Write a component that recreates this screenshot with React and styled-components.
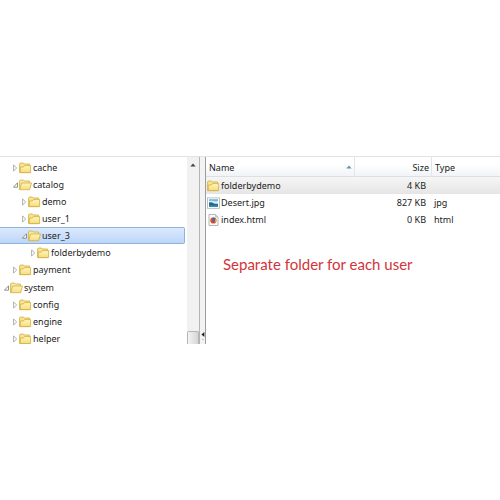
import React, { useState } from "react";
import styled, { createGlobalStyle } from "styled-components";

const tree = [
  { name: "cache", level: 1 },
  { name: "catalog", level: 1, open: true },
  { name: "demo", level: 2 },
  { name: "user_1", level: 2 },
  { name: "user_3", level: 2, open: true },
  { name: "folderbydemo", level: 3 },
  { name: "payment", level: 1 },
  { name: "system", level: 0, open: true },
  { name: "config", level: 1 },
  { name: "engine", level: 1 },
  { name: "helper", level: 1 },
];

const files = [
  { name: "folderbydemo", size: "4 KB", type: "", icon: "folder" },
  { name: "Desert.jpg", size: "827 KB", type: "jpg", icon: "image" },
  { name: "index.html", size: "0 KB", type: "html", icon: "html" },
];

const Arrow = ({ open }) => (
  <svg width="6" height="8" viewBox="0 0 6 8" fill="#fff" strokeWidth="0.8">
    {open ? (
      <path d="M4.5 1.8V6.2H0.4Z" stroke="#777" />
    ) : (
      <path d="M0.6 1L3.7 4L0.6 7Z" stroke="#9a9a9a" />
    )}
  </svg>
);

const FolderIcon = ({ open }) => (
  <svg width="13" height="12" viewBox="0 0 13 12">
    <defs>
      <linearGradient id="folder" x1="0" y1="0" x2="0" y2="1">
        <stop offset="0" stopColor="#fff6bd" />
        <stop offset="1" stopColor="#f6dc7c" />
      </linearGradient>
    </defs>
    {open ? (
      <g stroke="#d0ad40" strokeWidth="0.8" strokeLinejoin="round">
        <path d="M0.6 10.6V2L1.4 1H4.4L5.4 2H10.4V5" fill="#fbeaa0" />
        <path d="M0.7 10.7L2.6 4H12.5L10.6 10.7Z" fill="url(#folder)" />
      </g>
    ) : (
      <g stroke="#d0ad40" strokeWidth="0.8" strokeLinejoin="round">
        <path d="M0.6 10.6V2L1.4 1H4.4L5.4 2H10.6V10.6Z" fill="#f9e38c" />
        <path d="M1.3 10.6V5L4.4 5L5.4 3.6H11.6V10.6Z" fill="url(#folder)" />
      </g>
    )}
  </svg>
);

const ImageIcon = () => (
  <svg width="13" height="12" viewBox="0 0 13 12">
    <rect x="0.5" y="0.9" width="12" height="10.4" fill="#fff" stroke="#aab2b8" strokeWidth="0.8" />
    <rect x="2" y="2.2" width="9" height="7.6" fill="#6fb6e2" />
    <path d="M2 4.2C5 2.8 7 5.4 11 4V6.4H2Z" fill="#d5effa" />
    <path d="M2 5.4L4.6 5.2L8 7L11 7.2V9.8H2Z" fill="#256a80" />
    <path d="M2 8.6L11 8.8V9.8H2Z" fill="#3f8fc4" />
  </svg>
);

const HtmlIcon = () => (
  <svg width="13" height="12" viewBox="0 0 13 12">
    <path d="M2 0.5H8.6L11 2.9V11.5H2Z" fill="#fafafa" stroke="#a5a5a5" strokeWidth="0.8" />
    <path d="M8.6 0.5V2.9H11" fill="#ddd" stroke="#a5a5a5" strokeWidth="0.6" />
    <circle cx="6.4" cy="6.4" r="3.1" fill="#e2622a" />
    <circle cx="6.8" cy="5.8" r="2" fill="#3b6fb5" />
    <path d="M3.4 5C3.8 7.4 6 8 8.6 6.8C8 9.8 3.4 10.2 3.4 5Z" fill="#d8431f" />
    <path d="M8.4 4.2C9.6 5.6 9.5 7.4 8.2 8.6L8 6.6Z" fill="#f4a640" />
  </svg>
);

const FileIcon = ({ type }) => {
  if (type === "image") return <ImageIcon />;
  if (type === "html") return <HtmlIcon />;
  return <FolderIcon />;
};

const App = () => {
  const [selected, setSelected] = useState("user_3");

  return (
    <Page>
      <GlobalStyle />
      <Explorer>
        <Tree>
          {tree.map((item) => (
            <TreeItem key={item.name} $root={item.level === 0}>
              <TreeButton
                type="button"
                $level={item.level}
                $selected={item.name === selected}
                onClick={() => setSelected(item.name)}
              >
                <Arrow open={item.open} />
                <FolderIcon open={item.open} />
                <Label>{item.name}</Label>
              </TreeButton>
            </TreeItem>
          ))}
        </Tree>
        <ScrollBar>
          <ScrollUp type="button" aria-label="Scroll up">
            <svg width="6" height="4" viewBox="0 0 6 4">
              <path d="M0.3 3.6L3 0.4L5.7 3.6Z" fill="#444" />
            </svg>
          </ScrollUp>
          <Thumb />
        </ScrollBar>
        <Splitter>
          <svg width="4" height="8" viewBox="0 0 4 8">
            <path d="M3.4 0V5L0.4 2.5Z" fill="#222" />
            <rect x="1.5" y="7" width="1" height="1" fill="#999" />
          </svg>
        </Splitter>
        <FilePane>
          <FileTable>
            <colgroup>
              <NameCol />
              <SizeCol />
              <col />
            </colgroup>
            <thead>
              <tr>
                <HeadCell>
                  <SortHead>
                    Name
                    <svg width="6" height="4" viewBox="0 0 6 4">
                      <path d="M0.3 3.6L3 0.6L5.7 3.6Z" fill="#6f8fa8" />
                    </svg>
                  </SortHead>
                </HeadCell>
                <HeadCell $right>Size</HeadCell>
                <HeadCell>Type</HeadCell>
              </tr>
            </thead>
            <tbody>
              {files.map((file) => (
                <FileRow key={file.name} $active={file.icon === "folder"}>
                  <Cell>
                    <FileName>
                      <FileIcon type={file.icon} />
                      <Label>{file.name}</Label>
                    </FileName>
                  </Cell>
                  <Cell $right>{file.size}</Cell>
                  <Cell>{file.type}</Cell>
                </FileRow>
              ))}
            </tbody>
          </FileTable>
          <Note>Separate folder for each user</Note>
        </FilePane>
      </Explorer>
    </Page>
  );
};

export default App;

const GlobalStyle = createGlobalStyle`
  * {
    box-sizing: border-box;
  }
  body {
    margin: 0;
    background: #fff;
    color: #1c1c1c;
    font: 9px/17px "Noto Sans", "Open Sans", sans-serif;
  }
  button {
    padding: 0;
    border: 0;
    background: none;
    color: inherit;
    font: inherit;
  }
  svg {
    display: block;
    flex: none;
  }
`;

const Page = styled.main`
  min-height: 100vh;
  display: flex;
  align-items: center;
`;

const Explorer = styled.div`
  width: 100%;
  display: flex;
  border-top: 1px solid #e3e3e3;
`;

const Tree = styled.ul`
  flex: 1;
  max-width: 187px;
  height: 187px;
  margin: 0;
  padding: 2px 2px 0 0;
  overflow: hidden;
  list-style: none;
`;

const TreeItem = styled.li`
  height: 17px;
  margin-top: ${(props) => (props.$root ? 1 : 0)}px;
  display: flex;
`;

const TreeButton = styled.button`
  flex: 1;
  display: flex;
  align-items: center;
  padding-left: ${(props) => 4 + props.$level * 9}px;
  border: 1px solid ${(props) => (props.$selected ? "#8fb2dd" : "transparent")};
  border-left: 0;
  border-radius: 0 2px 2px 0;
  background: ${(props) =>
    props.$selected ? "linear-gradient(#dbe9fc, #bdd6f8)" : "none"};
  text-align: left;
`;

const Label = styled.span`
  margin-left: 1px;
  white-space: nowrap;
`;

const ScrollBar = styled.div`
  width: 12px;
  display: flex;
  flex-direction: column;
  justify-content: space-between;
  background: #f1f1f1;
`;

const ScrollUp = styled.button`
  height: 15px;
  display: flex;
  align-items: center;
  justify-content: center;
`;

const Thumb = styled.div`
  height: 13px;
  border: 1px solid #b4b4b4;
  border-bottom: 0;
  border-radius: 2px 2px 0 0;
  background: linear-gradient(90deg, #f4f4f4, #d6d6d8);
`;

const Splitter = styled.div`
  width: 7px;
  display: flex;
  align-items: flex-end;
  justify-content: center;
  padding-bottom: 4px;
  border-left: 1px solid #b4b4b4;
  border-right: 1px solid #9a9da2;
  background: #f3f3f3;
`;

const FilePane = styled.section`
  flex: 1;
  min-width: 0;
`;

const FileTable = styled.table`
  width: 100%;
  table-layout: fixed;
  border-collapse: separate;
  border-spacing: 0;
`;

const NameCol = styled.col`
  width: 149px;
`;

const SizeCol = styled.col`
  width: 77px;
`;

const HeadCell = styled.th`
  height: 20px;
  padding: 1px 2px 0 3px;
  border-right: 1px solid #e0e6ec;
  border-bottom: 1px solid #dcdfe3;
  background: linear-gradient(#fff 40%, #f1f3f6);
  font-weight: normal;
  text-align: ${(props) => (props.$right ? "right" : "left")};

  &:last-child {
    border-right: 0;
  }
`;

const SortHead = styled.span`
  display: flex;
  align-items: center;
  justify-content: space-between;
`;

const FileRow = styled.tr`
  background: ${(props) =>
    props.$active ? "linear-gradient(#f6f6f6, #e5e5e5)" : "none"};
`;

const Cell = styled.td`
  height: 17px;
  padding: 0 6px 0 1px;
  text-align: ${(props) => (props.$right ? "right" : "left")};

  &:last-child {
    padding-left: 2px;
  }
`;

const FileName = styled.span`
  display: flex;
  align-items: center;
`;

const Note = styled.p`
  margin: 24px 0 0 17px;
  color: #d2343a;
  font: 15px/24px Lato, sans-serif;
`;
